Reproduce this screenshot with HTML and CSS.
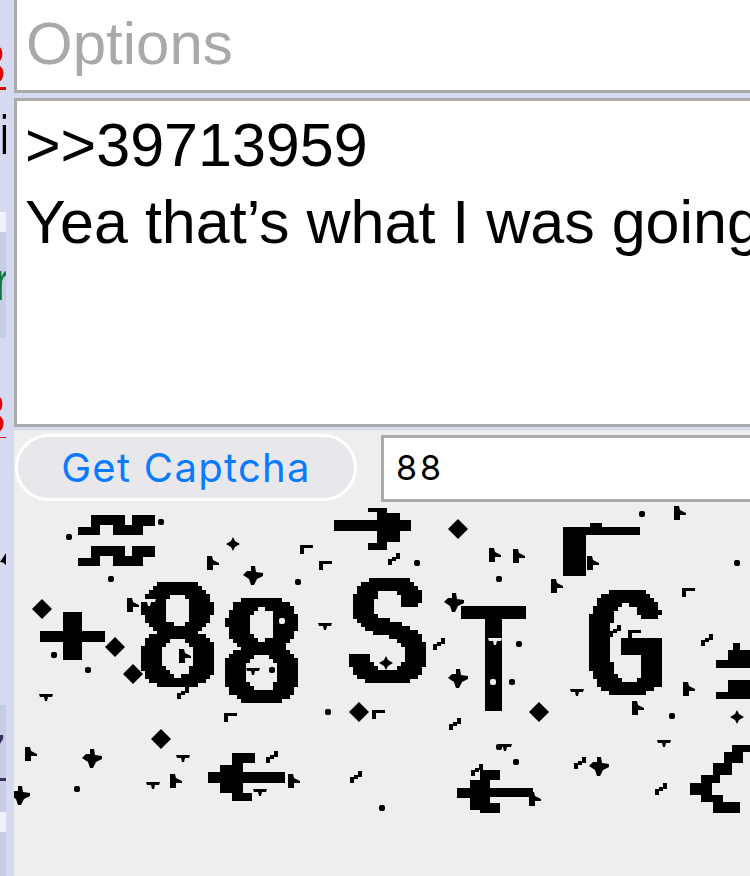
FILE: index.html
```html
<!DOCTYPE html>
<html lang="en">
<head>
<meta charset="utf-8">
<title>Quick Reply</title>
<link rel="stylesheet" href="styles.css">
</head>
<body>
<div class="page">
  <aside class="strip">
    <div class="frag frag-top"><span class="quote red">3</span></div>
    <div class="frag frag-i"><span>i</span></div>
    <div class="post-hl"></div>
    <div class="post-dark post-a"><span class="green">r</span></div>
    <div class="post-edge"></div>
    <div class="frag frag-mid"><span class="quote red">3</span></div>
    <div class="frag frag-arrow"><svg class="tick" viewBox="0 0 6 14"><path d="M6 0L0 9l3 .5L6 12z"/></svg></div>
    <div class="post-edge post-edge2"></div>
    <div class="post-dark post-b"><span class="quote navy">7</span></div>
    <div class="post-hl post-hl2"></div>
    <div class="post-dark post-c"></div>
  </aside>
  <main class="form">
    <div class="field field-options"><span class="placeholder">Options</span></div>
    <div class="field field-comment">
      <p class="line">&gt;&gt;39713959</p>
      <p class="line">Yea that’s what I was going to say</p>
    </div>
    <div class="captcha-row">
      <button class="get-captcha" type="button">Get Captcha</button>
      <div class="captcha-input">88</div>
    </div>
    <div class="captcha-image">
      <svg class="captcha-svg" viewBox="14 503 736 373" xmlns="http://www.w3.org/2000/svg" role="img" aria-label="captcha">
        <defs>
          <filter id="pixelate" x="14" y="503" width="736" height="373" filterUnits="userSpaceOnUse" primitiveUnits="userSpaceOnUse" color-interpolation-filters="sRGB">
            <feMorphology in="SourceGraphic" operator="dilate" radius="4 0" result="wide"/>
            <feFlood x="15" y="504" width="1" height="1" flood-color="#000"/>
            <feComposite x="14" y="503" width="4" height="4" result="cell"/>
            <feTile in="cell" result="grid"/>
            <feComposite in="wide" in2="grid" operator="in"/>
            <feMorphology operator="dilate" radius="2"/>
            <feComponentTransfer><feFuncA type="discrete" tableValues="0 1 1 1"/></feComponentTransfer>
          </filter>
          <path id="d" d="M0-10L4-6 6-4 10 0 6 4 4 6 0 10-4 6-6 4-10 0-6-4-4-6z"/>
          <path id="s" d="M0-7L2-3 7 0 2 3 0 7-2 3-7 0-2-3z"/>
          <path id="star" d="M-2-10L2-10 3-4 10-3 10 0 4 3 1 9-2 9-4 3-10-1-6-5-2-5z"/>
          <rect id="o" x="-3" y="-3" width="6" height="6" rx="2"/>
          <path id="f" d="M-6-7L-1-7 0-3 6 0 6 2 0 2 0 7-6 7z"/>
          <path id="t" d="M-7-4L7-4 6-1 2-1 1 3-1 3-2-1-6-1z"/>
          <path id="q" d="M-6 0L-2 0-2-2 2-2 2-6 6-6 6 0 2 0 2 2-2 2-2 6-6 6z"/>
          <path id="h" d="M-6-4L7-4 7-1-2-1-2 5-6 5z"/>
          <g id="wave">
            <rect x="78" y="527" width="22" height="8"/><rect x="91" y="515" width="34" height="10"/><rect x="91" y="515" width="9" height="20"/>
            <rect x="113" y="515" width="12" height="20"/><rect x="113" y="525" width="30" height="10"/><rect x="132" y="515" width="23" height="11"/><rect x="132" y="515" width="11" height="20"/>
          </g>
        </defs>
        <g class="ink">
          <use href="#wave"/><use href="#wave" y="31"/>
          <path d="M40 631H63V612H82V631H105V642H82V660H63V642H40z"/>
          <path d="M334 520H377V512H368V508H387V513H400V520H411V531H400V542H387V550H368V543H377V531H334z"/>
          <path d="M563 527H590V523H602V527H640V535H586V576H563z"/>
          <path d="M208 772H220V765H232V753H255V763H243V772H285V783H243V793H252V801H232V793H220V783H208z"/>
          <path d="M457 788H470V780H480V770H500V780H490V788H533V797H490V803H500V813H480V810H470V798H457z"/>
          <path d="M732 745H750V752H743V763H732V775H720V783H712V795H723V802H740V813H713V802H701V795H690V783H701V775H713V763H724V752H732z"/>
          <path d="M733 643H740V650H750V668H716V660H728V650H733z"/>
          <path d="M728 680H750V699H716V692H728z"/>
        </g>
        <g class="ink letters" filter="url(#pixelate)">
          <text class="glyph" x="178" y="686" text-anchor="middle" textLength="84" lengthAdjust="spacingAndGlyphs">8</text>
          <text class="glyph" x="262" y="701" text-anchor="middle" textLength="84" lengthAdjust="spacingAndGlyphs">8</text>
          <text class="glyph" x="388" y="682" text-anchor="middle" textLength="80" lengthAdjust="spacingAndGlyphs">S</text>
          <text class="glyph" x="493" y="709" text-anchor="middle" textLength="66" lengthAdjust="spacingAndGlyphs">T</text>
          <text class="glyph" x="625" y="694" text-anchor="middle" textLength="80" lengthAdjust="spacingAndGlyphs">G</text>
        </g>
        <g class="ink">
          <use href="#o" x="161" y="522"/><use href="#o" x="69" y="537"/><use href="#s" x="233" y="544"/><use href="#f" x="213" y="563"/><use href="#star" x="253" y="576"/><use href="#o" x="111" y="579"/><use href="#d" x="42" y="609"/><use href="#f" x="133" y="605"/><use href="#d" x="115" y="647"/><use href="#o" x="54" y="655"/><use href="#o" x="88" y="670"/><use href="#d" x="133" y="674"/><use href="#t" x="46" y="698"/><use href="#h" x="230" y="717"/><use href="#q" x="183" y="693"/><use href="#d" x="161" y="739"/><use href="#f" x="31" y="754"/><use href="#star" x="92" y="759"/><use href="#t" x="183" y="759"/><use href="#f" x="176" y="781"/><use href="#t" x="153" y="786"/><use href="#o" x="77" y="789"/><use href="#star" x="20" y="796"/><use href="#f" x="185" y="656"/>
          <use href="#h" x="306" y="549"/><use href="#h" x="325" y="565"/><use href="#q" x="394" y="559"/><use href="#o" x="417" y="563"/><use href="#d" x="458" y="529"/><use href="#f" x="495" y="555"/><use href="#o" x="298" y="582"/><use href="#o" x="499" y="579"/><use href="#t" x="325" y="627"/><use href="#t" x="253" y="672"/><use href="#o" x="272" y="670"/><use href="#s" x="386" y="663"/><use href="#star" x="454" y="603"/><use href="#q" x="439" y="644"/><use href="#star" x="458" y="679"/><use href="#o" x="328" y="712"/><use href="#d" x="359" y="712"/><use href="#h" x="378" y="714"/><use href="#q" x="455" y="724"/><use href="#o" x="499" y="747"/><use href="#q" x="272" y="757"/><use href="#f" x="294" y="781"/><use href="#t" x="260" y="793"/><use href="#q" x="356" y="777"/><use href="#o" x="382" y="808"/><use href="#q" x="477" y="770"/>
          <use href="#o" x="642" y="514"/><use href="#f" x="680" y="513"/><use href="#f" x="519" y="556"/><use href="#f" x="557" y="586"/><use href="#o" x="737" y="563"/><use href="#h" x="688" y="592"/><use href="#q" x="707" y="640"/><use href="#h" x="634" y="634"/><use href="#q" x="615" y="631"/><use href="#o" x="519" y="644"/><use href="#o" x="512" y="682"/><use href="#t" x="577" y="693"/><use href="#f" x="689" y="689"/><use href="#f" x="638" y="708"/><use href="#d" x="539" y="712"/><use href="#o" x="672" y="716"/><use href="#s" x="737" y="717"/><use href="#t" x="505" y="748"/><use href="#o" x="516" y="762"/><use href="#t" x="664" y="744"/><use href="#q" x="580" y="763"/><use href="#star" x="599" y="767"/><use href="#q" x="661" y="789"/><use href="#f" x="535" y="799"/><use href="#f" x="593" y="563"/>
        </g>
        <g class="paper">
          <use href="#t" x="149" y="603"/><use href="#o" x="282" y="621"/><use href="#t" x="495" y="642"/><use href="#o" x="493" y="682"/>
        </g>
        <rect class="cut" x="14" y="813" width="736" height="63"/>
      </svg>
    </div>
  </main>
</div>
</body>
</html>
```

FILE: styles.css
```css
* { box-sizing: border-box; }
html, body { margin: 0; padding: 0; background: #d6daf0; }
.page {
  display: flex;
  width: 750px;
  height: 876px;
  overflow: hidden;
  font-family: "Liberation Sans", Arial, sans-serif;
}
.strip {
  flex: 0 0 14px;
  display: flex;
  flex-direction: column;
  padding-right: 8px;
  overflow: hidden;
}
.strip > * { flex: none; }
.frag, .post-dark {
  display: flex;
  justify-content: flex-end;
  overflow: hidden;
  white-space: nowrap;
  font-size: 58px;
  color: #000;
}
.quote { text-decoration: underline; text-decoration-thickness: 3px; text-underline-offset: 3px; }
.red { color: #d00; }
.navy { color: #34345c; }
.green { color: #117743; }
.frag-top { height: 92px; padding-top: 31px; line-height: 66px; }
.frag-i { height: 120px; padding-top: 15px; line-height: 56px; font-size: 56px; justify-content: flex-start; }
.frag-i span { margin-left: -1px; }
.post-hl { height: 20px; background: #f0f2ff; }
.post-dark { background: #c8cce6; }
.post-a { height: 101px; padding-top: 21px; line-height: 56px; font-size: 56px; justify-content: flex-start; }
.post-a .green { margin-left: -7px; }
.post-edge { height: 5px; background: #c0cee0; }
.post-edge2 { height: 4px; }
.frag-mid { height: 100px; padding-top: 46px; line-height: 60px; }
.frag-arrow { height: 267px; padding-top: 115px; }
.tick { width: 6px; height: 14px; fill: #000; }
.post-b { height: 103px; padding-top: 16px; line-height: 60px; }
.post-c { height: 44px; }

.form {
  flex: 1;
  display: flex;
  flex-direction: column;
  min-width: 0;
}
.field {
  background: #fff;
  border: 3px solid #aaa;
  border-right: 0;
  font-size: 61px;
  white-space: nowrap;
  overflow: hidden;
}
.field-options {
  height: 93px;
  border-top: 0;
  padding: 11px 0 0 9px;
  line-height: 66px;
  font-size: 60px;
}
.placeholder { color: #a9a9a9; }
.field-comment {
  height: 329px;
  margin-top: 5px;
  padding: 6px 0 0 8px;
}
.line { margin: 0; line-height: 77px; color: #000; }
.captcha-row {
  flex: none;
  margin-top: 3px;
  height: 73px;
  padding: 4px 0 0 1px;
  background: #eee;
  display: flex;
  align-items: flex-start;
  gap: 24px;
}
.get-captcha {
  flex: none;
  width: 342px;
  height: 67px;
  border: 3px solid #fff;
  border-radius: 34px;
  background: #e8e8ec;
  color: #0a7aff;
  font-family: Inter, "Noto Sans", sans-serif;
  font-size: 40px;
  letter-spacing: 1.3px;
  padding: 0;
}
.captcha-input {
  flex: 1;
  height: 67px;
  margin-top: 1px;
  padding-left: 12px;
  background: #fff;
  border: 3px solid #aaa;
  border-right: 0;
  color: #000;
  font-family: Inter, "Noto Sans", sans-serif;
  font-size: 34px;
  letter-spacing: 3px;
  line-height: 60px;
}
.captcha-image { flex: 1; background: #eee; min-height: 0; }
.captcha-svg { display: block; width: 736px; height: 373px; filter: blur(0.4px); }
.ink { fill: #000; }
.paper { fill: #eee; }
.cut { fill: #eee; }
.glyph {
  font-family: "Liberation Mono", monospace;
  font-weight: 400;
  font-size: 155px;
}
```
